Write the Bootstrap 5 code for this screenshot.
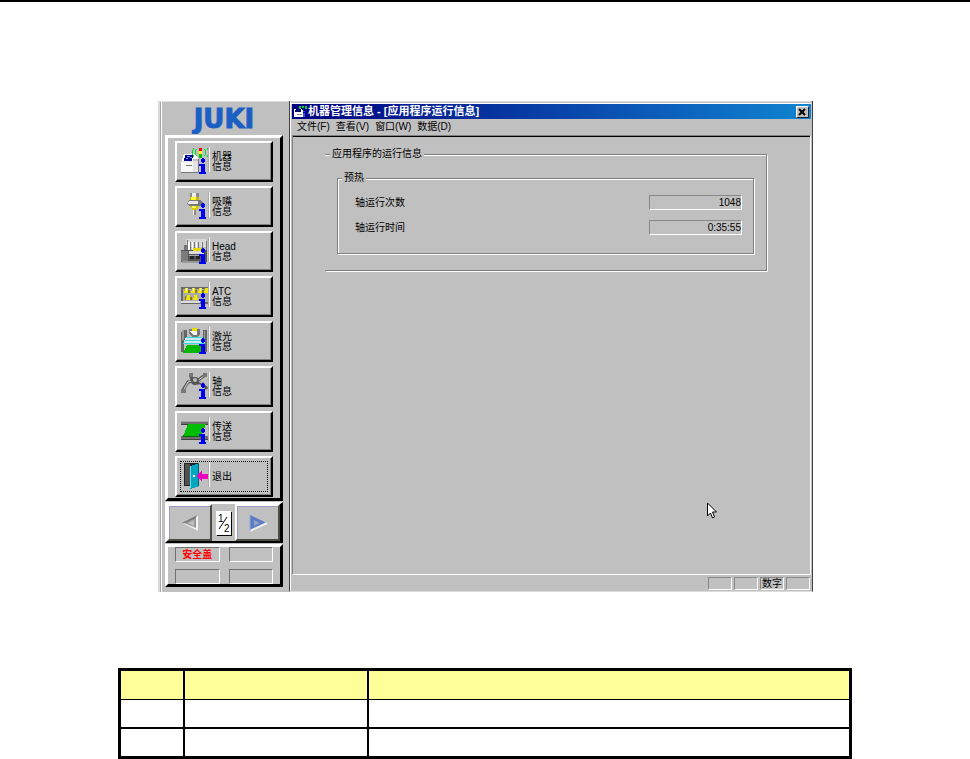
<!DOCTYPE html>
<html lang="zh-CN">
<head>
<meta charset="utf-8">
<meta name="viewport" content="width=device-width, initial-scale=1">
<title>机器管理信息</title>
<link href="https://cdn.jsdelivr.net/npm/bootstrap@5.3.0/dist/css/bootstrap.min.css" rel="stylesheet">
<style>
:root{--face:#c0c0c0;--dim:#808080}
body{background:#fff;color:#000;font:10px/14px "Liberation Sans","Noto Sans CJK SC",sans-serif}
svg{display:block;flex:none}
.top-rule{border-top:2px solid #000}
.app-wrap{padding:99px 157px 0 158px}
.app{background:var(--face)}
.side{flex:0 0 131px;gap:1px;border-left:2px solid #dcdcdc;box-shadow:inset 1px 0 #a8a8a8,inset 2px 0 #fff;border-top:1px solid #dcdcdc;padding:0 6px 5px 5px}
.brand{height:32px}
.raised{border:3px solid;border-color:#fff #000 #000 #fff}
.menu-frame{padding:3px 7px 1px;gap:4px}
.tool{display:flex;align-items:flex-start;height:41px;width:100%;padding:4px;border:2px solid;border-color:#fff #000 #000 #fff;box-shadow:inset -1px -1px #808080;background:var(--face);color:#000;text-align:left;line-height:10px}
.tool .cap{border-left:2px groove #fff;margin-left:-1px;padding:5px 0 0 2px;height:25px;white-space:nowrap}
.tool .cap.one{padding-top:10px}
.tool.leave{outline:1px dotted #000;outline-offset:-6px}
.pager{border-width:2px 3px 2px 2px;height:41px}
.arrow{flex:0 0 45px;background:var(--face);border:2px solid;border-color:#fff #4c4c40 #4c4c40 #fff;box-shadow:inset 1px 1px #9a9ac0;padding:0;display:flex;align-items:center;justify-content:center}
.half{background:#fff;box-shadow:1px 1px #000;width:15px;height:24px}
.lamps{display:grid;grid-template-columns:1fr 1fr;gap:7px 9px;padding:0 7px}
.lamp{height:15px;border:1px solid;border-color:#707070 #fff #fff #707070;color:#f00;font-weight:700;line-height:14px;text-align:center}
.win{min-width:0;border-left:1px solid #404040;border-right:1px solid #404040;border-bottom:1px solid #dcdcdc;box-shadow:inset 1px 0 #fff;padding:0 1px 0 2px}
.win-top{height:3px;border-top:1px solid #dcdcdc;border-bottom:1px solid #fff;margin-left:-2px}
.caption{height:15px;background:linear-gradient(90deg,#000080,#1084d0);color:#fff;font-size:11px;font-weight:700;line-height:15px;padding:0 2px 0 1px;gap:1px}
.caption h1{font:inherit;margin:0}
.shut{width:13px;height:12px;padding:0;background:var(--face);border:1px solid;border-color:#fff #202020 #202020 #fff}
.menus{height:16px;padding-left:5px;gap:6px;line-height:16px}
.menus a{color:#000;text-decoration:none}
.client{border:1px solid;border-color:var(--dim) #fff #fff var(--dim);box-shadow:inset 0 1px #000;padding:11px 43px 10px 32px}
fieldset{border:1px solid var(--dim);box-shadow:1px 1px #fff,inset 1px 1px #fff}
fieldset.outer{border-left:0;box-shadow:1px 1px #fff,inset 0 1px #fff;padding:10px 12px 16px}
fieldset.inner{padding:10px 11px 18px 17px}
legend{float:none;width:auto;font-size:10px;line-height:14px;margin:0;padding:0 2px;background:var(--face)}
.outer>legend{margin-left:-7px}
.inner>legend{margin-left:-13px}
.readings{display:grid;gap:10px}
.readings label{line-height:15px}
.readings input{width:93px;height:15px;background:transparent;border:1px solid;border-color:#888 #fff #fff #888;padding:0;text-align:right;font:10px/13px "Liberation Sans",sans-serif;color:#000;border-radius:0}
.status{height:16px;gap:2px;padding:2px 1px 1px 0}
.status span{width:24px;border:1px solid;border-color:#888 #fff #fff #888;line-height:12px;text-align:center}
.pointer-mark{position:absolute;right:94px;bottom:71px}
.grid-wrap{padding:76px 118px 0}
.legend-grid{width:100%;border:3px solid #000;border-collapse:separate;border-spacing:0;table-layout:fixed}
.legend-grid th,.legend-grid td{padding:0}
.legend-grid th{background:#ff9;height:28px}
.legend-grid th+th,.legend-grid td+td{border-left:2px solid #000}
.legend-grid tbody tr:first-child td{border-top:1px solid #000;height:28px}
.legend-grid tbody tr:last-child td{border-top:2px solid #000;height:29px}
.c1{width:62px}.c2{width:184px}
</style>
<script src="https://cdn.jsdelivr.net/npm/bootstrap@5.3.0/dist/js/bootstrap.bundle.min.js"></script>
</head>
<body>
<svg width="0" height="0" class="position-absolute" aria-hidden="true"><defs>
<g id="info" fill="#0000f0"><rect x="20" y="12" width="4" height="3"/><rect x="21" y="11" width="2" height="5"/><rect x="18" y="17" width="5" height="2"/><rect x="20" y="17" width="4" height="9"/><rect x="18" y="25" width="7" height="2"/></g>
</defs></svg>
<div class="top-rule"></div>
<div class="app-wrap">
<div class="app d-flex">
<aside class="side d-flex flex-column">
  <div class="brand d-flex justify-content-center">
    <svg width="100" height="32" viewBox="0 0 100 32" role="img" aria-label="JUKI"><text x="50" y="26" text-anchor="middle" font-family="DejaVu Sans" font-weight="700" font-size="26" fill="#1c5fc4" stroke="#1c5fc4" stroke-width="1">JUKI</text></svg>
  </div>
  <nav class="raised menu-frame d-flex flex-column" aria-label="信息">
    <button class="tool" type="button">
      <svg width="28" height="28" shape-rendering="crispEdges"><path d="M3 7h10l4 4v4H0z" fill="#fff"/><path d="M0 14h17v12H0z" fill="#e2e2e2"/><path d="M0 15h12v11H0z" fill="#f8f8f8"/><path d="M0 25h19v1H0zM17 12h1v13h-1zM5 18h6v1H5z" fill="#777"/><path d="M4 8h8l-1 6H3z" fill="#00008c"/><path d="M6 9h3v1H6zM5 11h2v1H5zM9 10h2v1H9z" fill="#6aa0ff"/><path d="M12 12h5v2h-5z" fill="#c0c0c0"/><rect x="18" y="1" width="3" height="3" fill="#f00000"/><rect x="18" y="4" width="3" height="3" fill="#ff0"/><rect x="18" y="7" width="3" height="4" fill="#00c000"/><path d="M15.500 2q-3 4 0 7M13 1q-3 5 0 9M23.500 2q3 4 0 7M26 1q3 5 0 9" fill="none" stroke="#00dc28"/><use href="#info"/></svg>
      <span class="cap">机器<br>信息</span></button>
    <button class="tool" type="button">
      <svg width="28" height="28" shape-rendering="crispEdges"><path d="M9 1h9v5H9z" fill="#8c8c8c"/><path d="M11 1h4v5h-4z" fill="#eee"/><path d="M9 5h9v4H9z" fill="#c8b400"/><path d="M10 5h5v3h-5z" fill="#ffff30"/><path d="M8 8h12l2 3-3 3H9l-3-2z" fill="#777"/><path d="M8 9h9v3H7z" fill="#e8e8e8"/><path d="M9 14h9l-2 4h-5z" fill="#d8c800"/><path d="M11 14h4v2h-4z" fill="#ffff60"/><path d="M12 18h3v5h-3z" fill="#888"/><path d="M12 18h1v5h-1z" fill="#fff"/><use href="#info"/></svg>
      <span class="cap">吸嘴<br>信息</span></button>
    <button class="tool" type="button">
      <svg width="28" height="28" shape-rendering="crispEdges"><path d="M5 2h20v8H5z" fill="#d8d8d8"/><path d="M3 8h3V3h1v14H3zM9 5h1v8H9zM13 5h1v7h-1zM17 5h1v7h-1zM21 5h1v7h-1zM25 4h1v12h-1z" fill="#777"/><path d="M7 5h2v8H7zM11 5h1v8h-1zM15 5h1v8h-1z" fill="#fff"/><path d="M0 13h26v12H0z" fill="#555"/><path d="M0 14h7v10H0z" fill="#7c7c7c"/><path d="M12 11h11v3H12z" fill="#e8d800"/><path d="M8 14h15v3H8z" fill="#ddd"/><path d="M9 19h4v3H9zM15 19h4v3h-4z" fill="#242424"/><path d="M1 24h17v2H1z" fill="#999"/><path d="M8 18h11v1H8z" fill="#aaa"/><use href="#info"/></svg>
      <span class="cap">Head<br>信息</span></button>
    <button class="tool" type="button">
      <svg width="28" height="28" shape-rendering="crispEdges"><path d="M0 5h27v17H0z" fill="#686868"/><path d="M2 7h25v13H2z" fill="#aaa"/><path d="M4 6h3v3h1v2H3V9h1zM11 6h3v3h1v2h-5V9h1zM18 6h3v3h1v2h-5V9h1zM24 6h3v5h-4V9h1zM6 13h3v3h1v2H5v-2h1zM13 13h3v3h1v2h-5v-2h1z" fill="#f4e600"/><path d="M7 8h2v3H7zM14 8h2v3h-2zM21 8h2v3h-2zM9 15h2v3H9zM4 14h1v4H4z" fill="#877c00"/><path d="M0 19h19v2H0z" fill="#ddd"/><path d="M5 6h1v3H5zM12 6h1v3h-1zM19 6h1v3h-1z" fill="#fff"/><use href="#info"/></svg>
      <span class="cap">ATC<br>信息</span></button>
    <button class="tool" type="button">
      <svg width="28" height="28" shape-rendering="crispEdges"><path d="M1 3h5v7L3 18v7H0V8zM22 3h4v22h-4z" fill="#666"/><path d="M1 3h2v10H1zM23 4h1v9h-1z" fill="#999"/><path d="M8 2h11v5l-3 3h-5L8 7z" fill="#777"/><path d="M9 4h7v4h-4z" fill="#f4f4f4"/><path d="M11 1h5v3h-5z" fill="#eadc00"/><path d="M5 10h17l2 7H2z" fill="#d4e8e8"/><path d="M5 10h17v1H5zM4 13h19v1H4zM2 16h22v1H2z" fill="#30dce0"/><path d="M6 18h15l3 8H2z" fill="#00b800"/><use href="#info"/></svg>
      <span class="cap">激光<br>信息</span></button>
    <button class="tool" type="button">
      <svg width="28" height="28"><path d="M2 18l5-8 7-1 8 3 4 5M9 4l9 8M24 3l-8 6-7-1" fill="none" stroke="#555" stroke-width="3"/><path d="M3 17l4-7 7-2M23 4l-7 5M17 9l8 4" stroke="#ddd" fill="none"/><circle cx="14" cy="9" r="4" fill="#555"/><circle cx="14" cy="8" r="2" fill="#bbb"/><path d="M8 1h4v4H8zM22 1h4v4h-4zM0 17h5v4H0z" fill="#777"/><use href="#info" shape-rendering="crispEdges"/></svg>
      <span class="cap">轴<br>信息</span></button>
    <button class="tool" type="button">
      <svg width="28" height="28" shape-rendering="crispEdges"><path d="M0 4h27v4H0zM0 19h27v4H0z" fill="#707070"/><path d="M0 7h27v1H0zM0 22h27v1H0z" fill="#404040"/><path d="M0 4h27v1H0z" fill="#a4a4a4"/><path d="M7 7h18l-5 13H2z" fill="#00bd00"/><path d="M3 17l-1 3h18v-1H3z" fill="#006800"/><use href="#info"/></svg>
      <span class="cap">传送<br>信息</span></button>
    <button class="tool leave" type="button">
      <svg width="28" height="28" shape-rendering="crispEdges"><path d="M3 1h14v23H3z" fill="#222"/><path d="M4 2h5v21H4z" fill="#505050"/><path d="M9 4l9-3v23l-9 3z" fill="#00a6c0"/><path d="M9 4l1-1v23H9z" fill="#60e0f0"/><path d="M17 2h1v22h-1z" fill="#006070"/><path d="M12 13h2v2h-2z" fill="#fff"/><path d="M15 14l6-5v3h6v5h-6v3z" fill="#f000c0"/></svg>
      <span class="cap one">退出</span></button>
  </nav>
  <div class="raised pager d-flex align-items-stretch justify-content-between">
    <button class="arrow" type="button" aria-label="上一页"><svg width="20" height="20"><path d="M18 2v16L2 10z" fill="#999"/><path d="M18 2L2 10l1 1L16 5z" fill="#777"/><path d="M18 18L2 10h2l12 5V4l2-2z" fill="#f2f2f2"/><path d="M14 7v6L8 10z" fill="#c0c0c0"/></svg></button>
    <div class="half align-self-center"><svg width="15" height="24" font-family="Liberation Sans" font-size="10" role="img" aria-label="1/2"><text x="2" y="11">1</text><text x="8" y="21">2</text><path d="M3 18L11 6" stroke="#000"/></svg></div>
    <button class="arrow" type="button" aria-label="下一页"><svg width="20" height="20"><path d="M2 2v16l17-8z" fill="#5b7cc4"/><path d="M2 18l17-8" stroke="#eee" stroke-width="2"/><path d="M2 2v16" stroke="#8ea8dc"/><path d="M6 7v6l6-3z" fill="#94a0bc"/></svg></button>
  </div>
  <div class="raised lamps">
    <div class="lamp">安全盖</div><div class="lamp"></div><div class="lamp"></div><div class="lamp"></div>
  </div>
</aside>
<main class="win flex-grow-1 d-flex flex-column position-relative">
  <div class="win-top"></div>
  <header class="caption d-flex align-items-center">
    <svg width="14" height="14" shape-rendering="crispEdges"><path d="M1 4h7l2 2v6H1z" fill="#fff"/><path d="M3 4h5v3H2z" fill="#000070"/><path d="M4 9h5v1H4z" fill="#888"/><path d="M6 1h2v3H6zM12 1h2v3h-2zM9 1h2v2H9z" fill="#00d830"/><path d="M10 6h2v1h-2zM10 8h2v4h-2z" fill="#3050ff"/></svg>
    <h1>机器管理信息 - [应用程序运行信息]</h1>
    <button class="shut ms-auto" type="button" aria-label="关闭"><svg width="11" height="10"><path d="M2 2l6 6M8 2L2 8" stroke="#000" stroke-width="2"/></svg></button>
  </header>
  <nav class="menus d-flex" aria-label="菜单"><a href="#">文件(F)</a><a href="#">查看(V)</a><a href="#">窗口(W)</a><a href="#">数据(D)</a></nav>
  <section class="client flex-grow-1">
    <fieldset class="outer">
      <legend>应用程序的运行信息</legend>
      <fieldset class="inner">
        <legend>预热</legend>
        <div class="readings">
          <div class="d-flex justify-content-between align-items-center"><label for="count">轴运行次数</label><input id="count" value="1048" readonly></div>
          <div class="d-flex justify-content-between align-items-center"><label for="time">轴运行时间</label><input id="time" value="0:35:55" readonly></div>
        </div>
      </fieldset>
    </fieldset>
  </section>
  <footer class="status d-flex justify-content-end"><span></span><span></span><span>数字</span><span></span></footer>
  <svg class="pointer-mark" width="12" height="18"><path d="M1.500 1v13l3-3 2 5 2-1-2-5h4z" fill="#fff" stroke="#000"/></svg>
</main>
</div>
</div>
<div class="grid-wrap">
<table class="legend-grid">
<colgroup><col class="c1"><col class="c2"><col></colgroup>
<thead><tr><th></th><th></th><th></th></tr></thead>
<tbody><tr><td></td><td></td><td></td></tr><tr><td></td><td></td><td></td></tr></tbody>
</table>
</div>
</body>
</html>
